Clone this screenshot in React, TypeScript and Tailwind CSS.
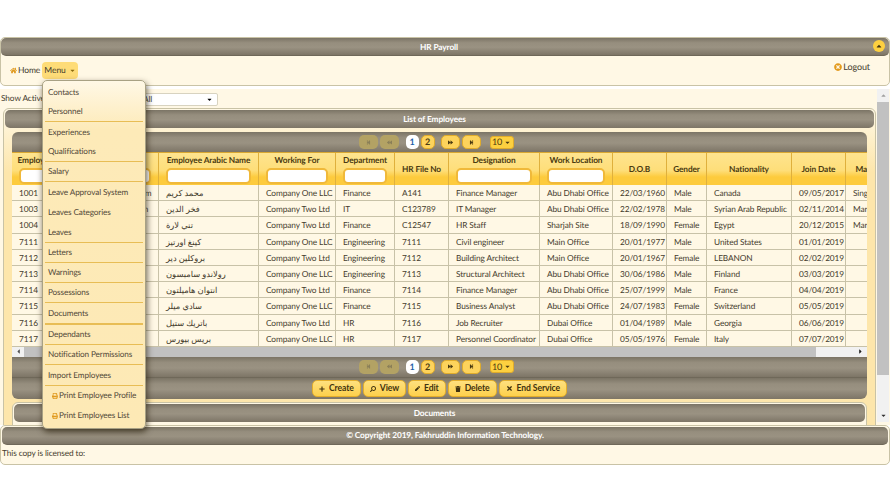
import {
  FaBackward,
  FaCaretDown,
  FaCaretUp,
  FaCaretLeft,
  FaCaretRight,
  FaForward,
  FaHome,
  FaPen,
  FaPlus,
  FaPrint,
  FaSearch,
  FaStepBackward,
  FaStepForward,
  FaTimes,
  FaTimesCircle,
  FaTrash,
} from "react-icons/fa";

const bar =
  "bg-[linear-gradient(180deg,#7b7465_0%,#968e7e_28%,#9a9282_55%,#8b8374_78%,#7d7566_100%)]";

const columns = [
  { name: "Employee No", input: true },
  { name: "Employee Name", input: true },
  { name: "Employee Arabic Name", input: true },
  { name: "Working For", input: true },
  { name: "Department", input: true },
  { name: "HR File No", input: false },
  { name: "Designation", input: true },
  { name: "Work Location", input: true },
  { name: "D.O.B", input: false },
  { name: "Gender", input: false },
  { name: "Nationality", input: false },
  { name: "Join Date", input: false },
  { name: "Marital Status", input: false },
];

const employees = [
  ["1001", "Mohammed Kareem", "محمد كريم", "Company One LLC", "Finance", "A141", "Finance Manager", "Abu Dhabi Office", "22/03/1960", "Male", "Canada", "09/05/2017", "Single"],
  ["1003", "Fakhr Aldeen Karim", "فخر الدين", "Company Two Ltd", "IT", "C123789", "IT Manager", "Abu Dhabi Office", "22/02/1978", "Male", "Syrian Arab Republic", "02/11/2014", "Married"],
  ["1004", "Tony Lara", "تني لارة", "Company Two Ltd", "Finance", "C12547", "HR Staff", "Sharjah Site", "18/09/1990", "Female", "Egypt", "20/12/2015", "Married"],
  ["7111", "King Ortiz", "كينغ اورتيز", "Company One LLC", "Engineering", "7111", "Civil engineer", "Main Office", "20/01/1977", "Male", "United States", "01/01/2019", ""],
  ["7112", "Brooklyn Dyer", "بروكلين دير", "Company Two Ltd", "Engineering", "7112", "Building Architect", "Main Office", "20/01/1967", "Female", "LEBANON", "02/02/2019", ""],
  ["7113", "Rolando Sampson", "رولاندو سامبسون", "Company One LLC", "Engineering", "7113", "Structural Architect", "Abu Dhabi Office", "30/06/1986", "Male", "Finland", "03/03/2019", ""],
  ["7114", "Antoine Hamilton", "انتوان هاميلتون", "Company Two Ltd", "Finance", "7114", "Finance Manager", "Abu Dhabi Office", "25/07/1999", "Male", "France", "04/04/2019", ""],
  ["7115", "Sadie Miller", "سادي ميلر", "Company One LLC", "Finance", "7115", "Business Analyst", "Abu Dhabi Office", "24/07/1983", "Female", "Switzerland", "05/05/2019", ""],
  ["7116", "Patrick Steel", "باتريك ستيل", "Company Two Ltd", "HR", "7116", "Job Recruiter", "Dubai Office", "01/04/1989", "Male", "Georgia", "06/06/2019", ""],
  ["7117", "Bryce Bowers", "بريس بيورس", "Company One LLC", "HR", "7117", "Personnel Coordinator", "Dubai Office", "05/05/1976", "Female", "Italy", "07/07/2019", ""],
];

const gridCols =
  "grid grid-cols-[60px_87px_100px_77px_59px_54px_91px_73px_54px_40px_85px_54px_70px]";

// h is the distance to the next item, it isn't quite regular in the picture
const menuItems = [
  { label: "Contacts", h: "h-5", sep: "" },
  { label: "Personnel", h: "h-5", sep: "border-b-[1.5px]" },
  { label: "Experiences", h: "h-5", sep: "" },
  { label: "Qualifications", h: "h-5", sep: "border-b-[1.5px]" },
  { label: "Salary", h: "h-5", sep: "border-b-[1.5px]" },
  { label: "Leave Approval System", h: "h-5", sep: "" },
  { label: "Leaves Categories", h: "h-5", sep: "" },
  { label: "Leaves", h: "h-[20.5px]", sep: "border-b-[1.5px]" },
  { label: "Letters", h: "h-5", sep: "border-b-[1.5px]" },
  { label: "Warnings", h: "h-[20.5px]", sep: "border-b-[1.5px]" },
  { label: "Possessions", h: "h-5", sep: "border-b-[1.5px]" },
  { label: "Documents", h: "h-[21.5px]", sep: "border-b-2" },
  { label: "Dependants", h: "h-[20.5px]", sep: "border-b-[1.5px]" },
  { label: "Notification Permissions", h: "h-5", sep: "border-b-[1.5px]" },
  { label: "Import Employees", h: "h-[20.5px]", sep: "border-b-[1.5px]" },
];

function Pager() {
  const off = "h-[14px] w-[19px] rounded-[5px] bg-[#b3a264] text-[#8a7f58] flex items-center justify-center";
  const on = "h-[14px] w-[19px] rounded-[5px] bg-[#fdd35c] border border-[#e0ac2b] text-[#4a3a10] flex items-center justify-center";
  return (
    <div className={`${bar} h-5 flex items-center justify-center pr-[7px]`}>
      <div className={`${off} mr-[2px]`}>
        <FaStepBackward size={5} />
      </div>
      <div className={`${off} mr-[7px]`}>
        <FaBackward size={5} />
      </div>
      <div className="h-[14px] w-[13px] rounded-[5px] bg-white text-[#1f5fa8] text-[9px] font-bold flex items-center justify-center mr-[2px]">
        1
      </div>
      <div className="h-[14px] w-[14px] rounded-[5px] bg-[#fdd35c] border border-[#e0ac2b] text-[#4a3a10] text-[9px] font-bold flex items-center justify-center mr-[6px]">
        2
      </div>
      <div className={`${on} mr-[2px]`}>
        <FaForward size={5} />
      </div>
      <div className={`${on} mr-[9px]`}>
        <FaStepForward size={5} />
      </div>
      <div className="h-[13px] w-6 rounded-[3px] bg-[#fdd040] border border-[#e0ac2b] text-[#4a3a10] text-[9px] flex items-center justify-center gap-[2px]">
        10 <FaCaretDown size={7} />
      </div>
    </div>
  );
}

function ActionButton({ icon, label }: { icon: React.ReactNode; label: string }) {
  return (
    <button className="h-[17px] px-[6px] rounded-[5px] bg-[linear-gradient(180deg,#fee07f,#fdd04c)] border border-[#e3ae2c] text-[8.6px] font-bold text-[#3f3210] flex items-center gap-[4px]">
      {icon}
      {label}
    </button>
  );
}

function Menu() {
  return (
    <div className="absolute left-[42px] top-[80px] w-[104px] h-[349px] rounded-[5px] border border-[#a8a184] bg-[linear-gradient(180deg,#fff8e6_0%,#fdeab8_14%,#fde9b5_100%)] shadow-[1px_3px_6px_rgba(40,30,10,0.7)] px-[2px] pt-[1px] text-[8.2px] tracking-[-0.12px] text-[#514838] whitespace-nowrap">
      {menuItems.map((item) => (
        <div
          key={item.label}
          className={`${item.h} ${item.sep} border-[#e8bd55] flex items-center pl-[3px]`}
        >
          {item.label}
        </div>
      ))}
      <div className="h-5 flex items-center pl-[7px] gap-[1px]">
        <FaPrint size={6} className="text-[#e09a20] shrink-0" /> Print Employee Profile
      </div>
      <div className="h-5 flex items-center pl-[7px] gap-[1px]">
        <FaPrint size={6} className="text-[#e09a20] shrink-0" /> Print Employees List
      </div>
    </div>
  );
}

export default function App() {
  return (
    <div className="relative w-[890px] h-[500px] overflow-hidden bg-white pt-[37px] font-['Lato','DejaVu_Sans',sans-serif] text-[8.3px] tracking-[-0.1px] text-[#453c2d] [text-rendering:geometricPrecision]">
      {/* top panel */}
      <div className="h-[49px] rounded-[5px] border border-[#c9c3a6] bg-[#fff8e5]">
        <div className={`${bar} h-[18px] rounded-[5px] border-b border-[#6f6859] flex items-center justify-center relative text-white font-bold pr-[12px] pt-[1px]`}>
          HR Payroll
          <div className="absolute right-[4px] top-[2px] w-[12px] h-[12px] rounded-full bg-[#fdd040] text-[#3f3210] flex items-center justify-center">
            <FaCaretUp size={8} />
          </div>
        </div>
        <div className="flex items-start justify-between pl-[9px] pr-[19px] pt-[6px]">
          <div className="flex items-center">
            <FaHome size={7} className="text-[#e09a20] mr-[1px]" />
            <span className="w-6 text-[8.5px]">Home</span>
            <div className="h-[17px] w-9 rounded-[4px] bg-[#fedc78] flex items-center justify-center gap-[3px] text-[8.5px]">
              Menu <FaCaretDown size={7} className="text-[#8a6a10]" />
            </div>
          </div>
          <div className="flex items-center gap-[1px] -mt-[2px] text-[9px]">
            <FaTimesCircle size={8} className="text-[#e39a1c]" />
            Logout
          </div>
        </div>
      </div>

      {/* scrolling middle */}
      <div className="mt-[3px] h-[336px] bg-[#fff8e5] flex overflow-hidden">
        <div className="flex-1 min-w-0 pl-[3px] pr-[1px]">
          <div className="h-[19px] flex items-center">
            <span className="ml-[-2px] w-[48px] shrink-0 whitespace-nowrap">Show Active</span>
            <div className="ml-[71px] w-[98px] h-[13px] mt-[1px] bg-white border border-[#d8d3c0] rounded-[2px] flex items-center justify-between pl-[22px] pr-[4px]">
              All <FaCaretDown size={7} className="text-black" />
            </div>
          </div>
          <div className="h-[319px] rounded-t-[6px] border border-[#c9c3a6] bg-[linear-gradient(180deg,#fff8e5_0%,#fde6ab_20%,#fde6ab_100%)] px-[1px] pt-[1px]">
            <div className={`${bar} h-[18px] rounded-[5px] flex items-center justify-center text-white font-bold pr-[10px]`}>
              List of Employees
            </div>
            <div className="mx-[7px] mt-[4px]">
              <div className="rounded-t-[6px] overflow-hidden">
                <Pager />
              </div>
              <div className="overflow-hidden">
                <div className={`${gridCols} w-[904px] h-[33px] bg-[linear-gradient(180deg,#fee48f_0%,#fede79_55%,#fdcb3d_75%,#fdcb3d_100%)] border-t border-[#d9a732] text-[#4a3a10] font-bold`}>
                  {columns.map((c) => (
                    <div
                      key={c.name}
                      className="border-r border-[#dfb03c] flex flex-col items-center justify-center px-[7px] whitespace-nowrap overflow-hidden"
                    >
                      {c.name}
                      {c.input && (
                        <div className="w-full shrink-0 h-[16px] mt-[1px] rounded-[5px] bg-white border-2 border-[#f0b93a]" />
                      )}
                    </div>
                  ))}
                </div>
                {employees.map((row) => (
                  <div
                    key={row[0]}
                    className={`${gridCols} w-[904px] h-[16.2px] bg-[#fff8e5] border-b border-[#c8c2a8]`}
                  >
                    {row.map((cell, i) => (
                      <div
                        key={i}
                        className="border-r border-[#c8c2a8] pl-[7px] leading-[16px] whitespace-nowrap overflow-hidden"
                      >
                        {cell}
                      </div>
                    ))}
                  </div>
                ))}
              </div>
              {/* horizontal scrollbar */}
              <div className="h-[10px] bg-[#f1f1f1] flex items-center">
                <div className="w-3 flex justify-center text-[#505050]">
                  <FaCaretLeft size={7} />
                </div>
                <div className="w-[792px] h-full bg-[#c1c1c1]" />
                <div className="flex-1 flex justify-end pr-[3px] text-[#202020]">
                  <FaCaretRight size={7} />
                </div>
              </div>
              <Pager />
              <div className={`${bar} h-[22px] rounded-b-[6px] flex items-center justify-center gap-[2px] border-t border-[#6f6859] pt-[1px]`}>
                <ActionButton icon={<FaPlus size={6} />} label="Create" />
                <ActionButton icon={<FaSearch size={6} className="-scale-x-100" />} label="View" />
                <ActionButton icon={<FaPen size={5} />} label="Edit" />
                <ActionButton icon={<FaTrash size={6} />} label="Delete" />
                <ActionButton icon={<FaTimes size={7} />} label="End Service" />
              </div>
              <div className="mt-[3px] h-[30px] rounded-t-[6px] border border-[#c9c3a6] bg-[#fff8e5] px-[1px] pt-[1px]">
                <div className={`${bar} h-[18px] rounded-[5px] flex items-center justify-center text-white font-bold pr-[10px]`}>
                  Documents
                </div>
              </div>
            </div>
          </div>
        </div>
        {/* vertical scrollbar */}
        <div className="w-3 mr-[1px] h-[333px] bg-[#f1f1f1] flex flex-col items-center">
          <div className="h-[13px] flex items-center text-[#a0a0a0]">
            <FaCaretUp size={7} />
          </div>
          <div className="w-full h-[273px] bg-[#c1c1c1]" />
          <div className="flex-1 flex items-end pb-[3px] text-[#303030]">
            <FaCaretDown size={7} />
          </div>
        </div>
      </div>

      {/* footer */}
      <div className="h-[40px] rounded-[5px] border border-[#c9c3a6] bg-[#fff8e5] px-[1px] pt-[1px]">
        <div className={`${bar} h-[18px] rounded-[5px] border-b border-[#6f6859] flex items-center justify-center text-white font-bold`}>
          © Copyright 2019, Fakhruddin Information Technology.
        </div>
        <div className="pt-[2px]">This copy is licensed to:</div>
      </div>

      <Menu />
    </div>
  );
}
